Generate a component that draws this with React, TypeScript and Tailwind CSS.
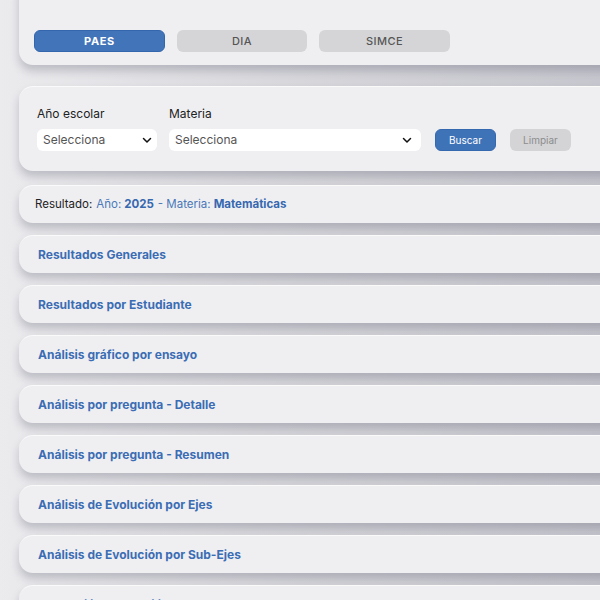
import React from 'react';

const sections = [
  'Resultados Generales',
  'Resultados por Estudiante',
  'Análisis gráfico por ensayo',
  'Análisis por pregunta - Detalle',
  'Análisis por pregunta - Resumen',
  'Análisis de Evolución por Ejes',
  'Análisis de Evolución por Sub-Ejes',
  'Evaluación por Habilidades',
];

const Chevron = () => (
  <svg width="12" height="12" viewBox="0 0 24 24" fill="none" stroke="#111" strokeWidth="3" strokeLinecap="round" strokeLinejoin="round">
    <path d="M5 9l7 7 7-7" />
  </svg>
);

const card =
  'w-[640px] bg-[#efeff2] rounded-l-[14px] shadow-[0_6px_9px_rgba(100,100,118,0.32)] border-t border-white/70';

export default function App() {
  return (
    <div
      className="h-[600px] w-[600px] overflow-hidden bg-gradient-to-r from-[#ebebee] via-[#d6d6db] to-[#c6c6ce] pl-[19px]"
      style={{ fontFamily: 'Inter, "Open Sans", sans-serif' }}
    >
      {/* test tabs */}
      <div className={`${card} -mt-[20px] pt-[49px] pb-[13px] pl-[15px] flex gap-[12px]`}>
        <button className="w-[131px] h-[22px] rounded-[6px] bg-[#4274b9] border border-[#3466ad] text-white text-[11px] font-bold tracking-[0.06em]">
          PAES
        </button>
        <button className="w-[130px] h-[22px] rounded-[6px] bg-[#d5d5d8] text-[#555] text-[11px] font-medium tracking-[0.04em]">
          DIA
        </button>
        <button className="w-[131px] h-[22px] rounded-[6px] bg-[#d5d5d8] text-[#555] text-[11px] font-medium tracking-[0.04em]">
          SIMCE
        </button>
      </div>

      {/* filters */}
      <div className={`${card} mt-[21px] h-[85px] pl-[18px] flex items-end pb-[20px] gap-[12px]`}>
        <div className="flex flex-col gap-[9px]">
          <span className="text-[12px] text-[#222] leading-none">Año escolar</span>
          <div className="w-[120px] h-[22px] bg-white rounded-[6px] flex items-center justify-between pl-[6px] pr-[4px]">
            <span className="text-[12px] text-[#555]">Selecciona</span>
            <Chevron />
          </div>
        </div>
        <div className="flex flex-col gap-[9px]">
          <span className="text-[12px] text-[#222] leading-none">Materia</span>
          <div className="w-[252px] h-[22px] bg-white rounded-[6px] flex items-center justify-between pl-[6px] pr-[8px]">
            <span className="text-[12px] text-[#555]">Selecciona</span>
            <Chevron />
          </div>
        </div>
        <button className="ml-[2px] w-[61px] h-[22px] rounded-[6px] bg-[#3f73b8] border border-[#3569af] text-white text-[10px]">
          Buscar
        </button>
        <button className="ml-[2px] w-[61px] h-[22px] rounded-[6px] bg-[#d4d4d7] text-[#8c8c8c] text-[10px]">
          Limpiar
        </button>
      </div>

      {/* result summary */}
      <div className={`${card} mt-[14px] h-[38px] flex items-center pl-[16px] text-[11.5px]`}>
        <span className="text-[#222]">Resultado:</span>
        <span className="ml-[4px] text-[#4a78b8]">Año:</span>
        <span className="ml-[3px] font-bold text-[#3768b0]">2025</span>
        <span className="ml-[4px] text-[#4a78b8]">- Materia:</span>
        <span className="ml-[3px] font-bold text-[#3768b0]">Matemáticas</span>
      </div>

      {sections.map((s) => (
        <div key={s} className={`${card} mt-[12px] h-[38px] flex items-center pl-[19px]`}>
          <span className="text-[12px] font-bold text-[#3b6db4]">{s}</span>
        </div>
      ))}
    </div>
  );
}
